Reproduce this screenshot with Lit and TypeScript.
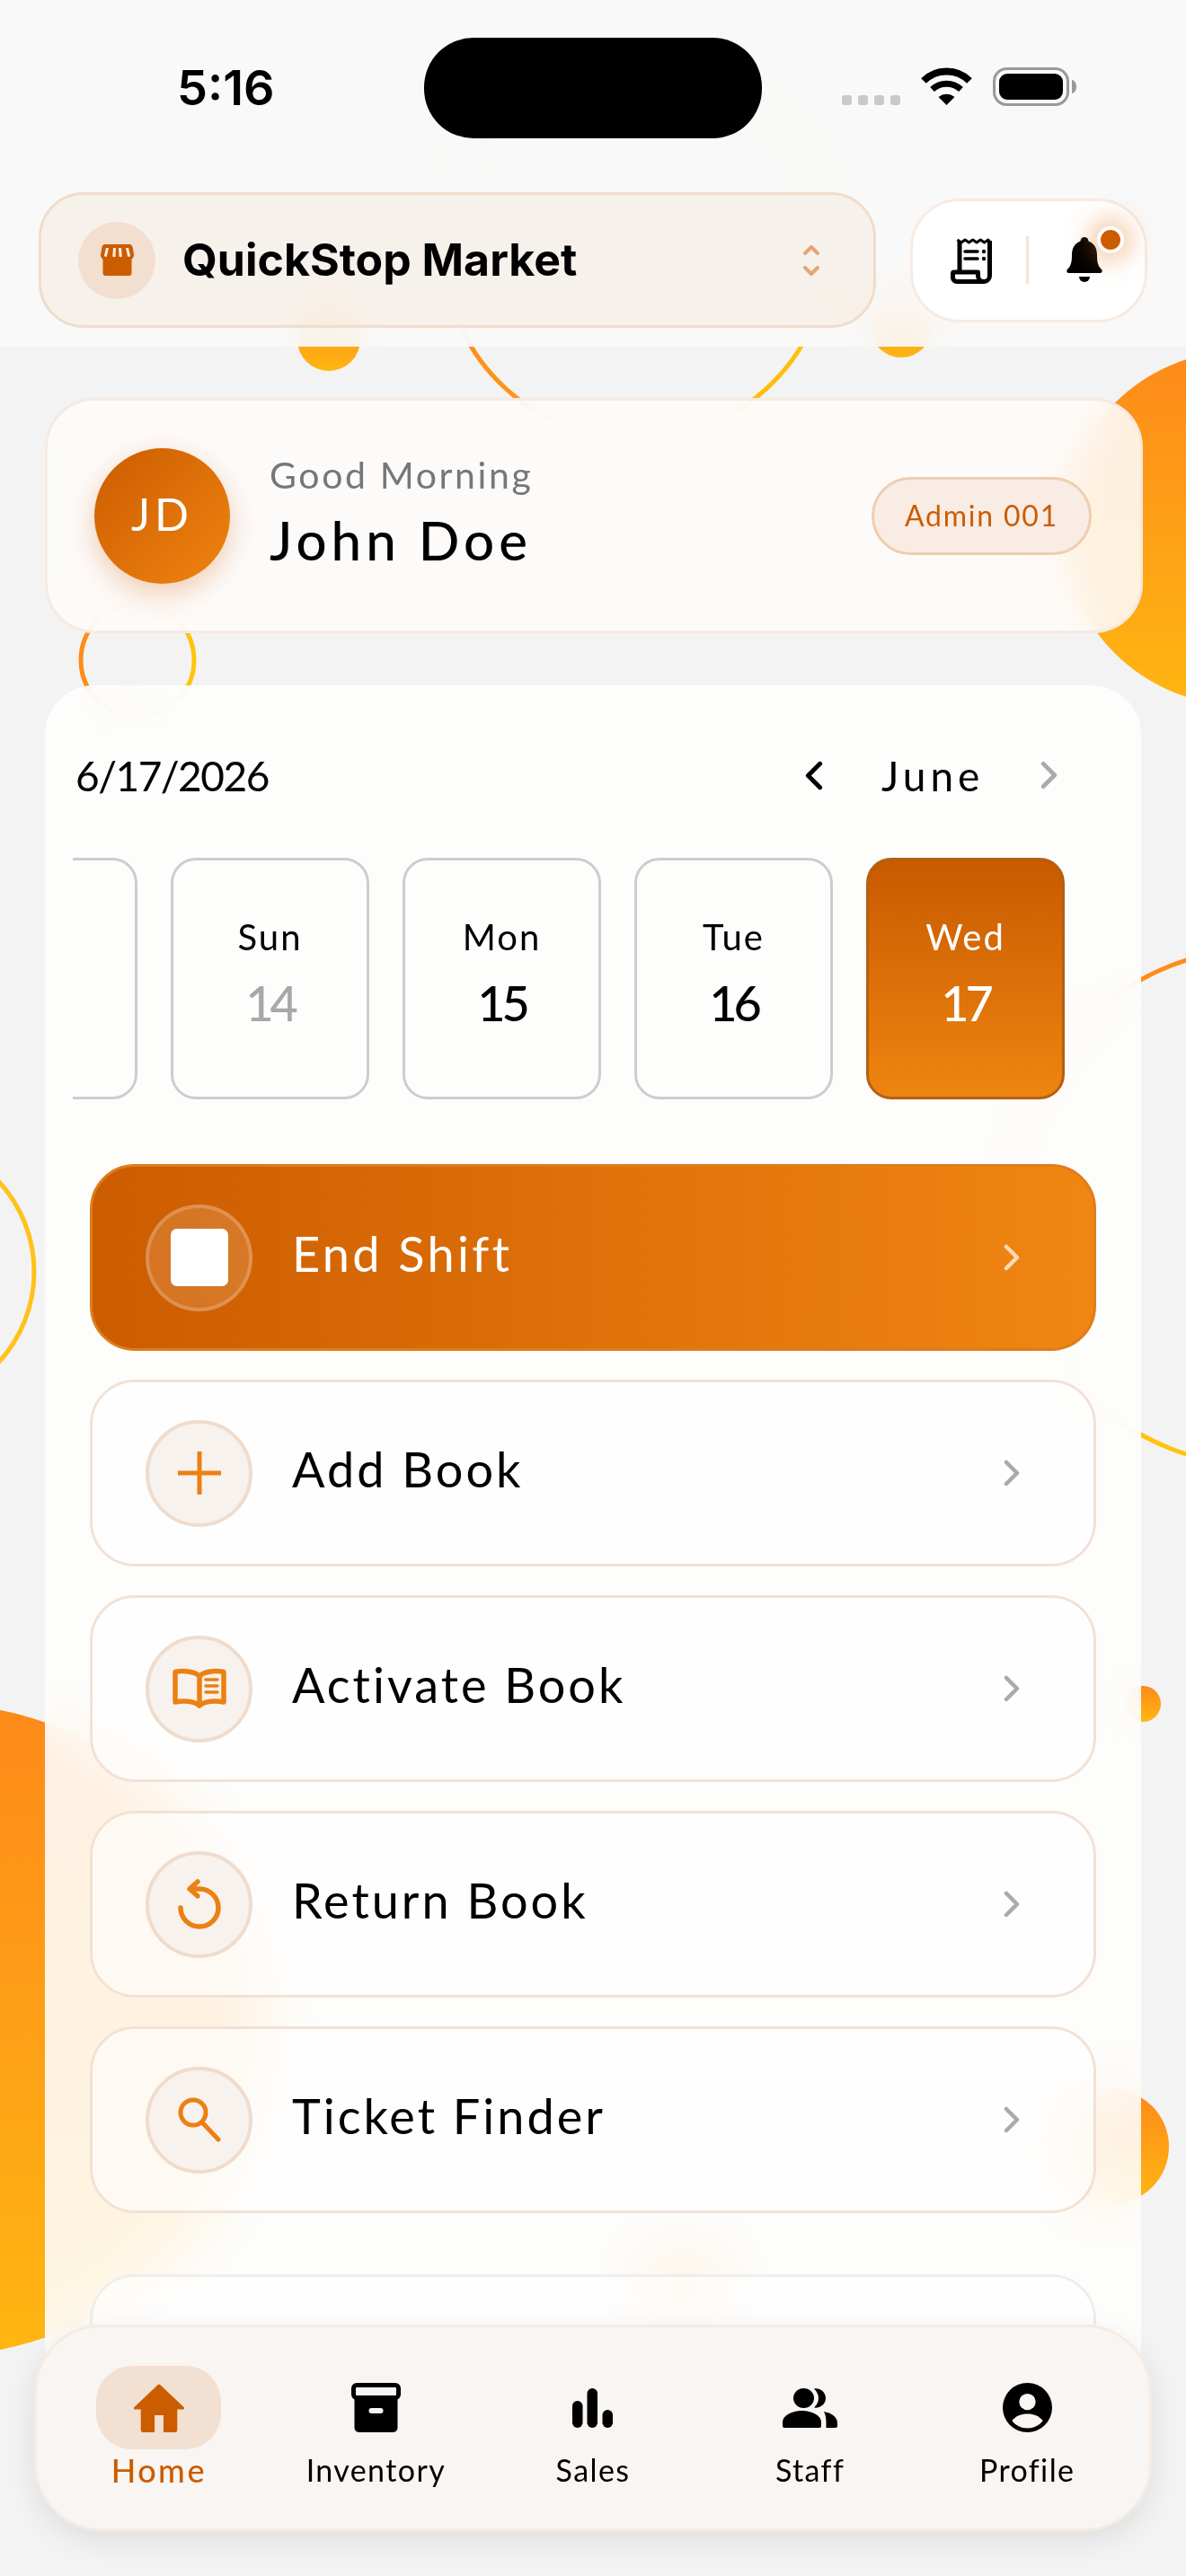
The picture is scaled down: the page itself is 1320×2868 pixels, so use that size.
import { html, css, LitElement } from 'lit';
import { customElement } from 'lit/decorators.js';
import { classMap } from 'lit/directives/class-map.js';

const chevron = (cls: string, flip = false) => html`
  <svg class=${cls} viewBox="0 0 18 30" fill="none" stroke="currentColor" stroke-width="4.5" stroke-linecap="round" stroke-linejoin="round">
    <polyline points=${flip ? '15,3 3,15 15,27' : '3,3 15,15 3,27'}></polyline>
  </svg>`;

const icons = {
  plus: html`<svg width="50" height="50" viewBox="0 0 50 50" fill="none" stroke="currentColor" stroke-width="5"><path d="M25 1v48M1 25h48"/></svg>`,
  book: html`<svg width="60" height="46" viewBox="0 0 60 46" fill="none" stroke="currentColor" stroke-width="5.500" stroke-linejoin="round" stroke-linecap="round">
    <path d="M30 9C24 3.500 12 2.500 3 4.500V38c9-2 21-1.500 27 4 6-5.500 18-6 27-4V4.500C48 2.500 36 3.500 30 9zM30 9v33"/>
    <path stroke-width="3.500" d="M37 13h13M37 20h13M37 27h13"/>
  </svg>`,
  ret: html`<svg width="48" height="56" viewBox="0 0 48 56" fill="none" stroke="currentColor" stroke-width="5.500" stroke-linecap="round" stroke-linejoin="round">
    <path d="M3 32a21 21 0 1 0 21-21h-9"/><path d="M22 3l-9 8 9 8"/>
  </svg>`,
  search: html`<svg width="48" height="50" viewBox="0 0 48 50" fill="none" stroke="currentColor" stroke-width="5" stroke-linecap="round">
    <circle cx="17" cy="17" r="14"/><path d="M27 28l18 19"/>
  </svg>`,
  stop: html`<span class="stop"></span>`,
};

const navIcons = {
  home: html`<svg width="58" height="54" viewBox="2 3 20 17" preserveAspectRatio="none" fill="currentColor"><path d="M10.300 20v-6h3.400v6h4.500a.8.8 0 0 0 .8-.8V12h2.200c.4 0 .6-.5.3-.8L12.500 3.400a.7.7 0 0 0-1 0l-9 7.800c-.3.300-.1.800.3.800H5v7.200c0 .4.400.8.800.8z"/></svg>`,
  inventory: html`<svg width="55" height="55" viewBox="0 0 55 55" fill="currentColor">
    <rect x="2.500" y="2.500" width="50" height="14" rx="3.500" fill="none" stroke="currentColor" stroke-width="5"/>
    <path d="M3.500 17h48v33a5 5 0 0 1-5 5h-38a5 5 0 0 1-5-5z"/>
    <rect x="19.500" y="28" width="16" height="6" rx="3" fill="#f8f5f2"/>
  </svg>`,
  sales: html`<svg width="45" height="44" viewBox="0 0 45 44" fill="currentColor">
    <rect x="0" y="14" width="11.500" height="30" rx="5.700"/><rect x="16.500" y="0" width="11.500" height="44" rx="5.700"/><rect x="33.500" y="24" width="11.500" height="20" rx="5.700"/>
  </svg>`,
  staff: html`<svg width="61" height="44" viewBox="0 0 61 44" fill="currentColor">
    <ellipse cx="23.500" cy="11" rx="11.500" ry="11"/>
    <path d="M0 38c0-8 11-13 21.500-13S43 30 43 38v4a2 2 0 0 1-2 2H2a2 2 0 0 1-2-2z"/>
    <path d="M35 .500c7-1 13 4 13 10.500s-6 11.500-13 10.500c3-3 5-6.500 5-10.500S38 3.500 35 .500z"/>
    <path d="M46 26c8 1.500 15 5.500 15 13v3a2 2 0 0 1-2 2H48.500v-5c0-5-.5-9.500-2.500-13z"/>
  </svg>`,
  profile: html`<svg width="55" height="55" viewBox="0 0 24 24">
    <circle cx="12" cy="12" r="12" fill="currentColor"/>
    <circle cx="12" cy="9.200" r="4" fill="#f8f5f2"/>
    <path d="M4.500 18.300C6.400 16 9 15 12 15s5.600 1 7.500 3.300C17.800 20.700 15 22 12 22s-5.800-1.300-7.500-3.700z" fill="#f8f5f2"/>
  </svg>`,
};

// first card is cut by the strip edge, its text never shows
const days = [
  { label: '', num: '', state: 'past' },
  { label: 'Sun', num: '14', state: 'past' },
  { label: 'Mon', num: '15', state: '' },
  { label: 'Tue', num: '16', state: '' },
  { label: 'Wed', num: '17', state: 'today' },
];

const actions = [
  { label: 'Add Book', icon: icons.plus },
  { label: 'Activate Book', icon: icons.book },
  { label: 'Return Book', icon: icons.ret },
  { label: 'Ticket Finder', icon: icons.search },
];

const tabs = [
  { label: 'Home', icon: navIcons.home, active: true },
  { label: 'Inventory', icon: navIcons.inventory },
  { label: 'Sales', icon: navIcons.sales },
  { label: 'Staff', icon: navIcons.staff },
  { label: 'Profile', icon: navIcons.profile },
];

// grey specks on the page background: x, y, w, h
const specks = [
  [303, 415, 15, 15], [560, 707, 15, 18], [1095, 700, 50, 29], [362, 755, 50, 10],
  [1297, 905, 23, 50], [0, 1231, 46, 50], [0, 1636, 28, 51], [38, 1792, 12, 49],
  [126, 2810, 51, 58], [42, 2850, 13, 16], [867, 2836, 15, 15], [1271, 2545, 5, 50],
];

@customElement('app-root')
export class AppRoot extends LitElement {
  static styles = css`
    :host {
      display: block;
      position: relative;
      width: 1320px;
      height: 2868px;
      overflow: hidden;
      background: #f3f3f3;
      color: #000;
      font-family: Lato, "Noto Sans", sans-serif;
    }
    .decor {
      position: absolute;
      top: 0;
      left: 0;
      width: 1320px;
      height: 2868px;
    }

    /* header */
    .header {
      position: relative;
      height: 386px;
      box-sizing: border-box;
      padding-top: 42px;
      background: rgba(250, 250, 250, 0.9);
      backdrop-filter: blur(28px);
    }
    .status {
      display: grid;
      grid-template-columns: 1fr 376px 1fr;
      height: 110px;
    }
    .time {
      font-family: Inter, sans-serif;
      font-weight: 600;
      font-size: 54px;
      line-height: 112px;
      letter-spacing: 0;
      padding-left: 197px;
    }
    .island {
      background: #000;
      border-radius: 55px;
    }
    .sys {
      display: flex;
      align-items: flex-start;
      padding: 33px 0 0 89px;
    }
    .dots {
      display: flex;
      gap: 7px;
      margin: 31px 23px 0 0;
    }
    .dots i {
      width: 11px;
      height: 11px;
      border-radius: 3px;
      background: #c9c9c9;
    }
    .battery { margin-left: 23px; }

    .topbar {
      display: flex;
      align-items: center;
      gap: 38px;
      margin-top: 62px;
      padding-left: 43px;
    }
    .store {
      width: 932px;
      height: 151px;
      box-sizing: border-box;
      display: flex;
      align-items: center;
      padding: 0 60px 0 41px;
      border: 3px solid #f1dccb;
      border-radius: 50px;
      background: rgba(224, 112, 20, 0.055);
    }
    .store-icon {
      width: 86px;
      height: 86px;
      border-radius: 50%;
      background: #f2dfd0;
      display: flex;
      align-items: center;
      justify-content: center;
      margin-right: 30px;
    }
    .store-name {
      flex: 1;
      font-family: Inter, sans-serif;
      font-weight: 700;
      font-size: 50px;
      letter-spacing: 0;
      margin-top: -2px;
    }
    .updown {
      display: flex;
      flex-direction: column;
      gap: 12px;
      color: #e2a678;
    }
    .quick {
      width: 264px;
      height: 138px;
      box-sizing: border-box;
      display: flex;
      align-items: center;
      position: relative;
      padding-left: 42px;
      border: 3px solid #f7ebe2;
      border-radius: 55px;
      background: rgba(255, 255, 255, 0.88);
    }
    .quick .sep {
      width: 3px;
      height: 53px;
      background: #f4e4d8;
      margin: 0 42px 0 37px;
    }
    .badge {
      position: absolute;
      left: 205px;
      top: 28px;
      width: 22px;
      height: 22px;
      border-radius: 50%;
      background: #cc5c00;
      border: 4px solid #fff;
      box-shadow: 0 0 26px 10px rgba(224, 120, 30, 0.35);
    }

    /* content */
    .main {
      position: relative;
      padding: 57px 0 0 50px;
    }
    .hello {
      width: 1222px;
      height: 262px;
      box-sizing: border-box;
      display: flex;
      align-items: center;
      padding: 0 54px 0 52px;
      border: 3px solid rgba(244, 230, 220, 0.8);
      border-radius: 55px;
      background: rgba(254, 252, 251, 0.88);
      backdrop-filter: blur(22px);
    }
    .avatar {
      width: 151px;
      height: 151px;
      box-sizing: border-box;
      padding-bottom: 4px;
      border-radius: 50%;
      background: linear-gradient(135deg, #cc5c00, #ee8410);
      box-shadow: 0 10px 32px rgba(204, 92, 0, 0.3);
      color: #fff;
      font-size: 50px;
      letter-spacing: 5px;
      display: flex;
      align-items: center;
      justify-content: center;
    }
    .who { flex: 1; padding: 0 0 8px 44px; }
    .greet {
      font-size: 41px;
      letter-spacing: 2.600px;
      color: #777;
      line-height: 50px;
    }
    .name {
      font-size: 60px;
      font-weight: 500;
      letter-spacing: 5px;
      line-height: 70px;
      margin-top: 12px;
    }
    .role {
      width: 245px;
      height: 87px;
      box-sizing: border-box;
      padding-bottom: 2px;
      display: flex;
      align-items: center;
      justify-content: center;
      border: 3px solid #f0cdb0;
      border-radius: 44px;
      background: #f8ece4;
      color: #cc5c00;
      font-size: 32px;
      letter-spacing: 1.800px;
    }

    .panel {
      width: 1220px;
      height: 2040px;
      margin-top: 58px;
      box-sizing: border-box;
      padding-top: 76px;
      border-radius: 55px;
      background: rgba(254, 254, 253, 0.88);
      backdrop-filter: blur(34px);
    }
    .dateline {
      display: flex;
      align-items: center;
      height: 48px;
      padding: 0 93px 0 34px;
      font-size: 46px;
    }
    .date { flex: 1; letter-spacing: -1.500px; }
    .month { width: 114px; margin: 0 63px 0 65px; text-align: center; letter-spacing: 5px; }
    .chev-k { width: 20px; height: 33px; color: #000; }
    .chev-g { width: 19px; height: 32px; color: #aaa; }

    .strip {
      display: flex;
      justify-content: flex-end;
      gap: 37px;
      width: 1104px;
      margin: 68px 0 0 31px;
      overflow: hidden;
    }
    .day {
      flex: 0 0 221px;
      height: 269px;
      box-sizing: border-box;
      padding-top: 62px;
      border: 3px solid #cdcdcd;
      border-radius: 28px;
      text-align: center;
    }
    .day .lb {
      font-size: 40px;
      line-height: 46px;
      letter-spacing: 2px;
    }
    .day .nm {
      font-size: 54px;
      font-weight: 500;
      line-height: 60px;
      margin-top: 21px;
      letter-spacing: -4px;
    }
    .day.past .nm { color: #a8a8a8; }
    .day.today {
      color: #fff;
      border-color: #b55f12;
      background: linear-gradient(180deg, #c85a00, #ee8510);
    }

    .rows {
      display: flex;
      flex-direction: column;
      gap: 32px;
      width: 1120px;
      margin: 72px 0 0 50px;
    }
    .row {
      height: 208px;
      box-sizing: border-box;
      display: flex;
      align-items: center;
      padding: 0 82px 0 59px;
      border: 3px solid #f3e1d5;
      border-radius: 50px;
      background: rgba(255, 255, 255, 0.6);
      font-size: 54px;
      letter-spacing: 3px;
    }
    .row .ic {
      width: 119px;
      height: 119px;
      box-sizing: border-box;
      display: flex;
      align-items: center;
      justify-content: center;
      border: 4px solid #f0dccc;
      border-radius: 50%;
      background: #f8f2ee;
      color: #ec8012;
      margin-right: 44px;
    }
    .row .tx {
      flex: 1;
      margin-top: -10px;
    }
    .row .go {
      width: 18px;
      height: 30px;
      color: #aaa;
    }
    .row.primary {
      border-color: #df7d1c;
      background: linear-gradient(90deg, #cc5c00, #f08612);
      color: #fff;
      letter-spacing: 3.400px;
    }
    .row.primary .ic {
      border-color: rgba(255, 255, 255, 0.2);
      background: rgba(255, 255, 255, 0.14);
    }
    .row.primary .go { color: rgba(255, 255, 255, 0.7); }
    .stop {
      width: 64px;
      height: 64px;
      background: #fff;
      border-radius: 7px;
    }
    .row.next {
      margin-top: 36px;
      border-color: #efeeec;
    }

    /* bottom tabs */
    .tabs {
      position: absolute;
      left: 38px;
      top: 2588px;
      width: 1244px;
      height: 230px;
      box-sizing: border-box;
      display: grid;
      grid-template-columns: repeat(5, 1fr);
      padding: 43px 15px 0;
      border: 3px solid #f6ebe2;
      border-radius: 75px;
      background: #f8f5f2;
      box-shadow: 0 10px 34px rgba(0, 0, 0, 0.09);
    }
    .tab {
      display: flex;
      flex-direction: column;
      align-items: center;
    }
    .tab .pill {
      width: 139px;
      height: 93px;
      display: flex;
      align-items: center;
      justify-content: center;
      border-radius: 40px;
    }
    .tab .cap {
      font-size: 34px;
      line-height: 40px;
      margin-top: 3px;
      letter-spacing: 1.400px;
    }
    .tab.on { color: #cc5c00; }
    .tab.on .pill { background: #f2e0d2; }
    .tab.on .cap { font-size: 36px; font-weight: 500; letter-spacing: 2.500px; }
  `;

  private decor() {
    return html`<svg class="decor" viewBox="0 0 1320 2868">
      <defs>
        <linearGradient id="fill" x1="0" y1="0" x2="0" y2="1">
          <stop offset="0" stop-color="#fd8a1a"/><stop offset="1" stop-color="#ffb612"/>
        </linearGradient>
        <linearGradient id="ringH" x1="0" y1="0" x2="1" y2="0">
          <stop offset="0" stop-color="#ff8a1a"/><stop offset="1" stop-color="#ffc60a"/>
        </linearGradient>
        <linearGradient id="ringV" x1="0" y1="0" x2="0" y2="1">
          <stop offset="0" stop-color="#ff8a1a"/><stop offset="1" stop-color="#ffc60a"/>
        </linearGradient>
      </defs>
      ${specks.map(([x, y, w, h]) => html`<rect x=${x} y=${y} width=${w} height=${h} fill="#ebebeb"/>`)}
      <circle cx="1380" cy="588" r="197" fill="url(#fill)"/>
      <circle cx="-70" cy="2260" r="363" fill="url(#fill)"/>
      <circle cx="1237" cy="2390" r="64" fill="url(#fill)"/>
      <circle cx="1272" cy="1897" r="20" fill="url(#fill)"/>
      <circle cx="366" cy="378" r="35" fill="url(#fill)"/>
      <circle cx="1003" cy="364" r="34" fill="url(#fill)"/>
      <circle cx="760" cy="2550" r="46" fill="url(#fill)"/>
      <circle cx="708" cy="274" r="215" fill="none" stroke="url(#ringH)" stroke-width="5"/>
      <circle cx="153" cy="735" r="63" fill="none" stroke="url(#ringH)" stroke-width="5"/>
      <circle cx="-110" cy="1416" r="148" fill="none" stroke="#ffc21a" stroke-width="5"/>
      <circle cx="1409" cy="1344" r="289" fill="none" stroke="url(#ringV)" stroke-width="5"/>
    </svg>`;
  }

  private statusBar() {
    return html`<div class="status">
      <div class="time">5:16</div>
      <div class="island"></div>
      <div class="sys">
        <div class="dots"><i></i><i></i><i></i><i></i></div>
        <svg width="57" height="42" viewBox="0 0 57 42" fill="none" stroke="#000">
          <path stroke-width="8" d="M3 15C17 1 40 1 54 15"/>
          <path stroke-width="7" d="M12.500 24.500C22 16 35 16 44.500 24.500"/>
          <path fill="#000" stroke="none" d="M19.500 33C25 28.500 32 28.500 37.500 33L28.500 42z"/>
        </svg>
        <svg class="battery" width="93" height="43" viewBox="0 0 93 43">
          <rect x="1.500" y="1.500" width="82" height="40" rx="14" fill="none" stroke="#999" stroke-width="3"/>
          <rect x="7" y="7" width="71" height="29" rx="9"/>
          <path fill="#999" d="M88 14c3 .5 5 3.500 5 7.500s-2 7-5 7.500z"/>
        </svg>
      </div>
    </div>`;
  }

  private topBar() {
    return html`<div class="topbar">
      <div class="store">
        <div class="store-icon">
          <svg width="37" height="35" viewBox="0 0 37 35">
            <path fill="#cc5c00" d="M5 0h27c2 0 3 1 3.500 3L37 11c.2 2.500-1 4.500-2.500 5.500V32a3 3 0 0 1-3 3h-26a3 3 0 0 1-3-3V16.500C1 15.500-.2 13.500 0 11L1.500 3C2 1 3 0 5 0z"/>
            <g fill="#fbeee3">
              <path d="M6 4h3L7 13c-.4 1.500-3 1-3-.5z"/><path d="M14 4h3l-.5 9c-.2 1.600-3 1.600-3.200 0z"/>
              <path d="M20 4h3l.7 9c0 1.600-2.900 1.600-3.200 0z"/><path d="M28 4h3l2 8.500c0 1.500-2.600 2-3 .5z"/>
            </g>
          </svg>
        </div>
        <div class="store-name">QuickStop Market</div>
        <div class="updown">
          <svg width="18" height="12" viewBox="0 0 18 12" fill="none" stroke="currentColor" stroke-width="4" stroke-linecap="round" stroke-linejoin="round"><polyline points="2,10 9,3 16,10"/></svg>
          <svg width="18" height="12" viewBox="0 0 18 12" fill="none" stroke="currentColor" stroke-width="4" stroke-linecap="round" stroke-linejoin="round"><polyline points="2,2 9,9 16,2"/></svg>
        </div>
      </div>
      <div class="quick">
        <svg width="47" height="52" viewBox="0 0 47 52" fill="none" stroke="#000" stroke-width="5" stroke-linejoin="round">
          <path d="M10 4V38M43.500 4V43a6.500 6.500 0 0 1-13 0V39H4a1.500 1.500 0 0 0-1.500 1.500V45A4.500 4.500 0 0 0 7 49.500H37"/>
          <path stroke-width="3" d="M7.500 3l4.300 3 4.300-3 4.300 3 4.300-3 4.300 3 4.300-3 4.300 3 4.300-3 2 3"/>
          <path stroke-width="3.500" stroke-linecap="round" d="M16 16h14M16 24h14"/>
          <circle cx="37" cy="16" r="2.200" fill="#000" stroke="none"/><circle cx="37" cy="24" r="2.200" fill="#000" stroke="none"/>
        </svg>
        <div class="sep"></div>
        <svg width="40" height="52" viewBox="0 0 40 52">
          <path d="M20 0a4.500 4.500 0 0 1 4.500 4.500C32 7 34 14 34 20c0 8 1 12 5 16 1.500 1.500.7 4-1.500 4h-35C.3 40-.5 37.500 1 36c4-4 5-8 5-16 0-6 2-13 9.500-15.500A4.500 4.500 0 0 1 20 0z"/>
          <path d="M14 44h12a6 6 0 0 1-12 0z"/>
        </svg>
        <span class="badge"></span>
      </div>
    </div>`;
  }

  private row(label: string, icon: unknown, cls = '') {
    return html`<div class="row ${cls}">
      <div class="ic">${icon}</div>
      <div class="tx">${label}</div>
      ${chevron('go')}
    </div>`;
  }

  render() {
    return html`
      ${this.decor()}
      <div class="header">
        ${this.statusBar()}
        ${this.topBar()}
      </div>
      <div class="main">
        <div class="hello">
          <div class="avatar">JD</div>
          <div class="who">
            <div class="greet">Good Morning</div>
            <div class="name">John Doe</div>
          </div>
          <div class="role">Admin 001</div>
        </div>
        <div class="panel">
          <div class="dateline">
            <div class="date">6/17/2026</div>
            ${chevron('chev-k', true)}
            <div class="month">June</div>
            ${chevron('chev-g')}
          </div>
          <div class="strip">
            ${days.map(d => html`<div class="day ${d.state}">
              <div class="lb">${d.label}</div>
              <div class="nm">${d.num}</div>
            </div>`)}
          </div>
          <div class="rows">
            ${this.row('End Shift', icons.stop, 'primary')}
            ${actions.map(a => this.row(a.label, a.icon))}
            <div class="row next"></div>
          </div>
        </div>
      </div>
      <nav class="tabs">
        ${tabs.map(t => html`<div class=${classMap({ tab: true, on: !!t.active })}>
          <div class="pill">${t.icon}</div>
          <div class="cap">${t.label}</div>
        </div>`)}
      </nav>
    `;
  }
}
